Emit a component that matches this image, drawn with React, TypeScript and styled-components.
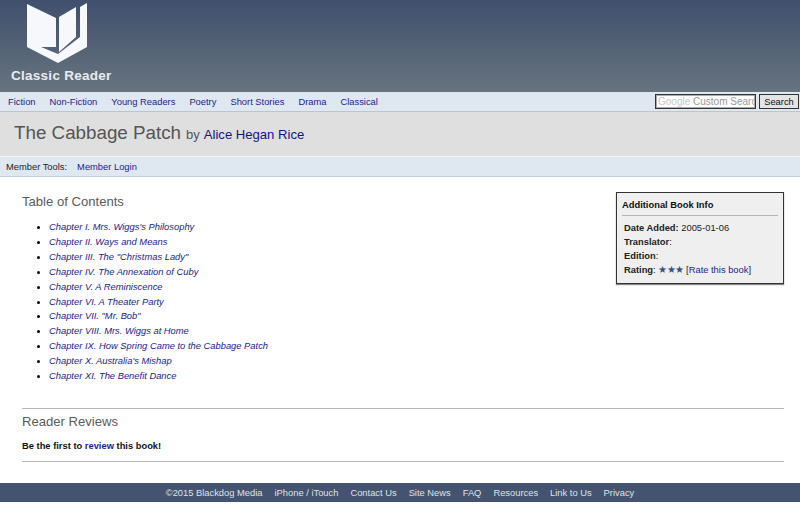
import { FC } from 'react';
import styled, { createGlobalStyle } from 'styled-components';

const GlobalStyle = createGlobalStyle`
  html, body {
    margin: 0;
    padding: 0;
    background: #fff;
    font-family: "Liberation Sans", Arial, sans-serif;
  }
`;

const navLinks = ['Fiction', 'Non-Fiction', 'Young Readers', 'Poetry', 'Short Stories', 'Drama', 'Classical'];

const chapters = [
  'Chapter I. Mrs. Wiggs\'s Philosophy',
  'Chapter II. Ways and Means',
  'Chapter III. The "Christmas Lady"',
  'Chapter IV. The Annexation of Cuby',
  'Chapter V. A Reminiscence',
  'Chapter VI. A Theater Party',
  'Chapter VII. "Mr. Bob"',
  'Chapter VIII. Mrs. Wiggs at Home',
  'Chapter IX. How Spring Came to the Cabbage Patch',
  'Chapter X. Australia\'s Mishap',
  'Chapter XI. The Benefit Dance',
];

const footerLinks = ['©2015 Blackdog Media', 'iPhone / iTouch', 'Contact Us', 'Site News', 'FAQ', 'Resources', 'Link to Us', 'Privacy'];

const Logo: FC = () => (
  <LogoSvg viewBox="0 0 61 64" width="61" height="64">
    <path d="M0 4 L29 18 L29 47 L14 47 L31 54 L53 37 L53 7 L60 3 L60 47 L31 63 L0 47 Z" fill="#f7f8fb" />
    <path d="M32 17 L49 7 L49 37 L32 52 Z" fill="#f7f8fb" />
  </LogoSvg>
);

const App: FC = () => (
  <>
    <GlobalStyle />
    <Header>
      <Logo />
      <Brand>Classic Reader</Brand>
    </Header>
    <Nav>
      <NavLinks>
        {navLinks.map((link) => (
          <NavLink key={link}>{link}</NavLink>
        ))}
      </NavLinks>
      <SearchBox>
        <GoogleMark>Google</GoogleMark> Custom Search
      </SearchBox>
      <SearchButton>Search</SearchButton>
    </Nav>
    <TitleBand>
      <BookTitle>The Cabbage Patch</BookTitle>
      <By>by</By>
      <Author>Alice Hegan Rice</Author>
    </TitleBand>
    <MemberBar>
      <span>Member Tools:</span>
      <NavLink>Member Login</NavLink>
    </MemberBar>
    <Main>
      <TopRow>
        <div>
          <Heading>Table of Contents</Heading>
          <ChapterList>
            {chapters.map((chapter) => (
              <li key={chapter}>
                <ChapterLink>{chapter}</ChapterLink>
              </li>
            ))}
          </ChapterList>
        </div>
        <InfoBox>
          <InfoTitle>Additional Book Info</InfoTitle>
          <InfoRow><b>Date Added:</b> 2005-01-06</InfoRow>
          <InfoRow><b>Translator</b>:</InfoRow>
          <InfoRow><b>Edition</b>:</InfoRow>
          <InfoRow>
            <b>Rating</b>: <Stars>★★★</Stars> [<InlineLink>Rate this book</InlineLink>]
          </InfoRow>
        </InfoBox>
      </TopRow>
      <Reviews>
        <Heading>Reader Reviews</Heading>
        <ReviewNote>
          Be the first to <InlineLink>review</InlineLink> this book!
        </ReviewNote>
      </Reviews>
    </Main>
    <Footer>
      {footerLinks.map((link) => (
        <span key={link}>{link}</span>
      ))}
    </Footer>
  </>
);

export default App;

const Header = styled.header`
  box-sizing: border-box;
  height: 92px;
  padding-left: 27px;
  position: relative;
  background: linear-gradient(#404f6d, #67747f);
`;

const LogoSvg = styled.svg`
  display: block;
`;

const Brand = styled.div`
  position: absolute;
  left: 11px;
  top: 68px;
  font-size: 13.5px;
  font-weight: bold;
  color: #e9ecef;
  letter-spacing: 0.27px;
`;

const Nav = styled.nav`
  box-sizing: border-box;
  height: 20px;
  display: flex;
  align-items: center;
  padding: 0 1px 0 8px;
  background: #dfe7f1;
  border-bottom: 1px solid #bcc4cd;
`;

const NavLinks = styled.div`
  display: flex;
  gap: 14px;
  flex: 1;
`;

const NavLink = styled.a`
  font-size: 9.35px;
  color: #1c1c8c;
`;

const SearchBox = styled.div`
  box-sizing: border-box;
  width: 101px;
  height: 15px;
  margin-right: 3px;
  padding: 0 0 0 2px;
  border: 1px solid #333;
  outline: 1px solid #aaa;
  outline-offset: -2px;
  background: #fff;
  font-size: 10px;
  line-height: 13px;
  white-space: nowrap;
  overflow: hidden;
  color: #999;
`;

const GoogleMark = styled.span`
  color: #c8c8c8;
`;

const SearchButton = styled.button`
  box-sizing: border-box;
  width: 40px;
  height: 15px;
  padding: 0;
  border: 1px solid #333;
  background: #e4e4e4;
  color: #111;
  font-family: "Liberation Sans", Arial, sans-serif;
  font-size: 9.35px;
`;

const TitleBand = styled.div`
  box-sizing: border-box;
  height: 45px;
  display: flex;
  align-items: baseline;
  padding: 10px 0 0 14px;
  background: #dfdfdf;
  border-bottom: 1px solid #f4f6f8;
`;

const BookTitle = styled.h1`
  margin: 0;
  font-size: 18.8px;
  font-weight: normal;
  color: #555;
`;

const By = styled.span`
  margin: 0 4px 0 5px;
  font-size: 13px;
  color: #555;
`;

const Author = styled.a`
  font-size: 13.1px;
  color: #12128c;
`;

const MemberBar = styled.div`
  box-sizing: border-box;
  height: 20px;
  display: flex;
  align-items: center;
  gap: 10px;
  padding-left: 6px;
  font-size: 9.35px;
  color: #222;
  background: #dfe7f1;
  border-bottom: 1px solid #c4ccd5;
`;

const Main = styled.main`
  padding: 0 16px 0 22px;
`;

const TopRow = styled.div`
  display: flex;
  justify-content: space-between;
  align-items: flex-start;
  height: 231px;
`;

const Heading = styled.h2`
  margin: 0;
  padding-top: 17px;
  font-size: 13.1px;
  font-weight: normal;
  line-height: 16px;
  color: #5a5a5a;
`;

const ChapterList = styled.ul`
  margin: 10px 0 0;
  padding-left: 27px;
  font-size: 9.37px;
  line-height: 14.9px;
`;

const ChapterLink = styled.a`
  font-style: italic;
  color: #1c1c8c;
`;

const InfoBox = styled.aside`
  box-sizing: border-box;
  width: 168px;
  height: 92px;
  margin-top: 15px;
  padding: 5px 5px;
  border: 1px solid #333;
  box-shadow: 0 1px 1px #888;
  background: #efefef;
  font-size: 9.35px;
  color: #222;
`;

const InfoTitle = styled.div`
  padding: 1px 0 4px;
  margin-bottom: 5px;
  border-bottom: 1px solid #b5b5b5;
  font-weight: bold;
  line-height: 12px;
  color: #111;
`;

const InfoRow = styled.div`
  padding-left: 2px;
  line-height: 14px;
`;

const Stars = styled.span`
  font-size: 10px;
  letter-spacing: -0.6px;
  color: #34507f;
`;

const InlineLink = styled.a`
  color: #1c1c8c;
`;

const Reviews = styled.section`
  height: 54px;
  box-sizing: border-box;
  border-top: 1px solid #b5b5b5;
  border-bottom: 1px solid #b5b5b5;

  ${Heading} {
    padding-top: 5px;
  }
`;

const ReviewNote = styled.p`
  margin: 11px 0 0;
  font-size: 9.35px;
  font-weight: bold;
  color: #111;
`;

const Footer = styled.footer`
  box-sizing: border-box;
  height: 19px;
  margin-top: 21px;
  display: flex;
  justify-content: center;
  align-items: center;
  gap: 12px;
  font-size: 9.35px;
  color: #dfe3e8;
  background: #435370;
`;
